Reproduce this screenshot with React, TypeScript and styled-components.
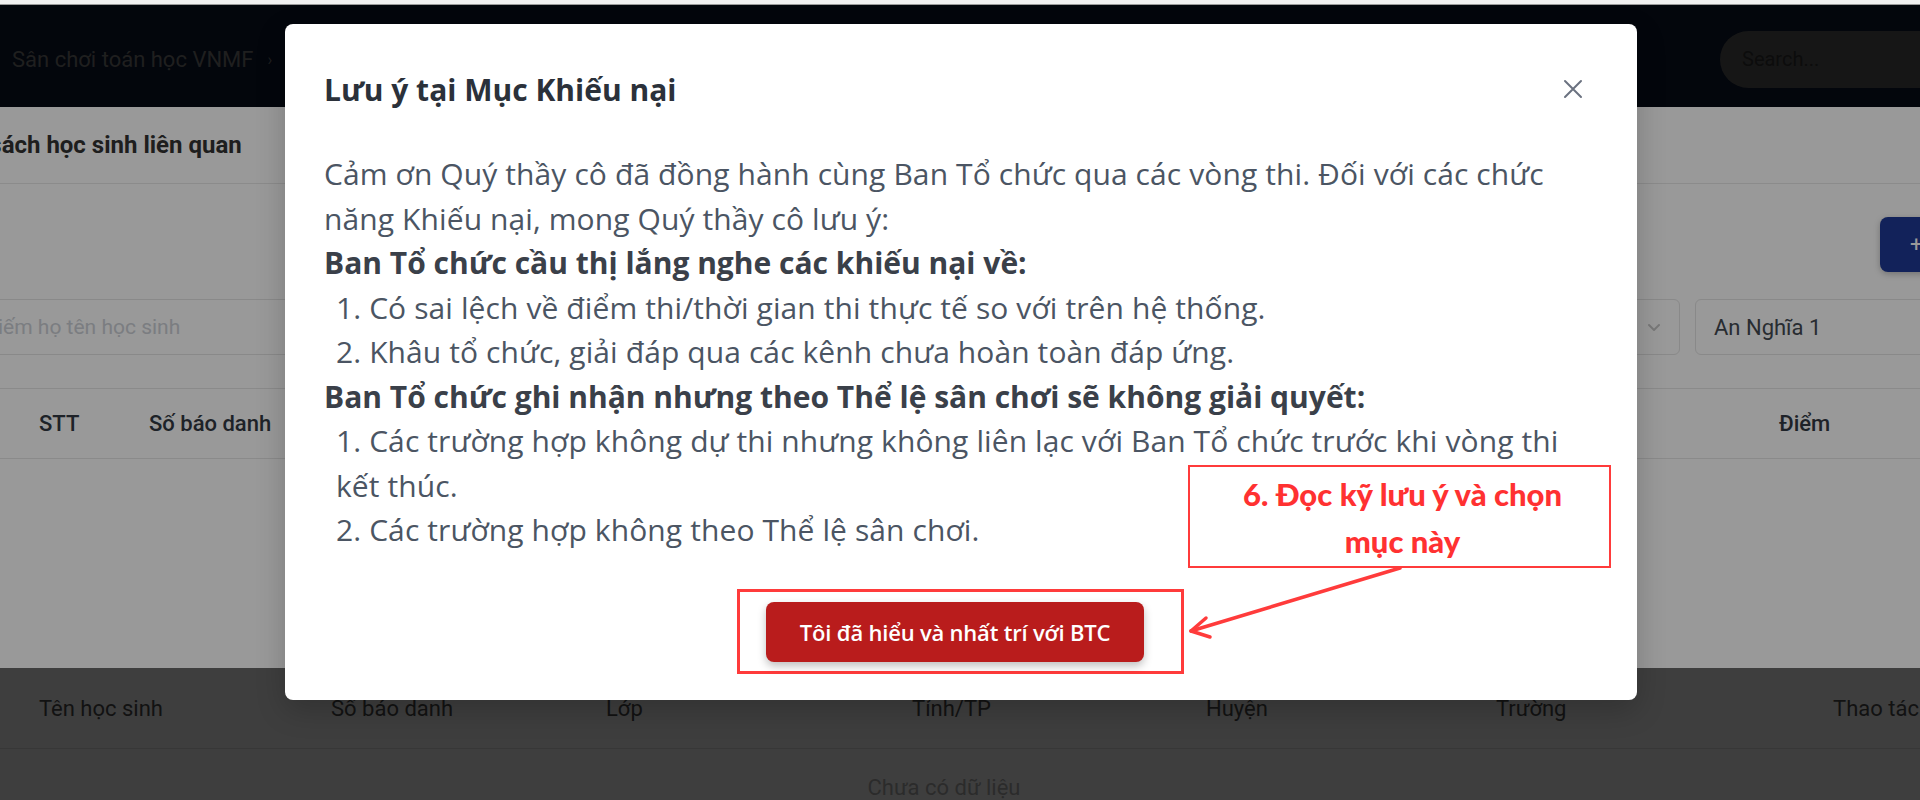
import React from 'react'
import styled, { createGlobalStyle } from 'styled-components'

const GlobalStyle = createGlobalStyle`
  html, body {
    margin: 0;
    padding: 0;
    background: #ffffff;
  }
  body {
    font-family: Roboto, "Noto Sans", sans-serif;
  }
  * {
    box-sizing: border-box;
  }
`

const LOWER_COLUMNS = ['Tên học sinh', 'Số báo danh', 'Lớp', 'Tỉnh/TP', 'Huyện', 'Trường', 'Thao tác']

const Shell = styled.div`
  width: 1920px;
  height: 800px;
  overflow: hidden;
  display: flex;
  flex-direction: column;
`

const BrowserEdge = styled.div`
  height: 5px;
  flex-shrink: 0;
  background: #f1f1f1;
  border-bottom: 1px solid #9a9a9a;
`

const Screen = styled.div`
  position: relative;
  flex: 1;
  display: flex;
  flex-direction: column;
  overflow: hidden;
`

const NavBar = styled.header`
  height: 102px;
  flex-shrink: 0;
  background: #050a14;
  display: flex;
  align-items: center;
  justify-content: space-between;
  padding: 6px 0 0 12px;
`

const Crumb = styled.div`
  display: flex;
  align-items: center;
  gap: 14px;
  font-size: 22px;
  color: #353535;
`

const CrumbArrow = styled.span`
  font-size: 16px;
`

const SearchPill = styled.div`
  width: 240px;
  height: 57px;
  margin-right: -40px;
  border-radius: 29px;
  background: #262626;
  color: #141414;
  font-size: 20px;
  display: flex;
  align-items: center;
  padding-left: 22px;
`

const Main = styled.main`
  width: calc(100% + 150px);
  margin-left: -72px;
  background: #ffffff;
  flex: 1;
  display: flex;
  flex-direction: column;
`

const PageTitle = styled.h1`
  margin: 0;
  height: 77px;
  display: flex;
  align-items: center;
  font-size: 24px;
  font-weight: 700;
  color: #333333;
  border-bottom: 1px solid #e8e8e8;
`

const Toolbar = styled.div`
  display: flex;
  justify-content: flex-end;
  padding-top: 33px;
`

const AddButton = styled.button`
  width: 118px;
  height: 55px;
  border: none;
  border-radius: 8px;
  background: #1e3996;
  color: #ffffff;
  font-size: 22px;
  font-family: inherit;
  text-align: left;
  padding-left: 30px;
  box-shadow: 0 2px 6px rgba(0, 0, 0, 0.25);
`

const Filters = styled.div`
  display: grid;
  grid-template-columns: 1fr 300px 303px;
  gap: 15px;
  margin-top: 27px;
  height: 56px;
`

const Field = styled.div<{ muted?: boolean }>`
  border: 1px solid #e4e4e4;
  border-radius: 6px;
  display: flex;
  align-items: center;
  justify-content: space-between;
  padding: 0 16px 0 ${p => (p.muted ? 17 : 18)}px;
  font-size: ${p => (p.muted ? 21 : 22)}px;
  color: ${p => (p.muted ? '#cdd1d7' : '#444a52')};
`

const TableHead = styled.div<{ columns: string }>`
  display: grid;
  grid-template-columns: ${p => p.columns};
  align-items: center;
  margin-top: 33px;
  height: 71px;
  padding-left: 111px;
  border-top: 1px solid #e6e6e6;
  border-bottom: 1px solid #e6e6e6;
  font-size: 22px;
  font-weight: 500;
  color: #333a44;
`

const LowerPanel = styled.section`
  height: 132px;
  flex-shrink: 0;
  background: #686868;
`

const LowerHead = styled.div`
  display: grid;
  grid-template-columns: 292px 275px 306px 294px 290px 337px 1fr;
  align-items: center;
  height: 81px;
  padding-left: 39px;
  border-bottom: 1px solid #5c5c5c;
  font-size: 22px;
  color: #1e1e1e;
`

const EmptyRow = styled.div`
  text-align: center;
  padding: 26px 32px 0 0;
  font-size: 22px;
  color: #484848;
`

const Backdrop = styled.div`
  position: absolute;
  inset: 0;
  background: rgba(0, 0, 0, 0.4);
`

const ModalLayer = styled.div`
  position: absolute;
  inset: 0;
  display: flex;
  justify-content: center;
  align-items: flex-start;
  padding: 19px 0 0 2px;
`

const Dialog = styled.div`
  position: relative;
  width: 1352px;
  background: #ffffff;
  border-radius: 8px;
  box-shadow: 0 10px 30px rgba(0, 0, 0, 0.2);
  padding: 47px 40px 26px 39px;
  font-family: "Open Sans", "Noto Sans", sans-serif;
`

const DialogHeader = styled.div`
  display: flex;
  align-items: center;
  justify-content: space-between;
  height: 36px;
`

const DialogTitle = styled.h2`
  margin: 0;
  font-size: 30px;
  font-weight: 700;
  color: #2b313a;
`

const CloseButton = styled.button`
  width: 48px;
  height: 48px;
  border: none;
  background: none;
  display: flex;
  align-items: center;
  justify-content: center;
  padding: 0;
  color: #6b7280;
`

const DialogBody = styled.div`
  margin-top: 45px;
  font-size: 30px;
  line-height: 44.5px;
  letter-spacing: 0.1px;
  color: #4b5563;
`

const Strong = styled.div`
  font-weight: 700;
  color: #3a4049;
  letter-spacing: 0;
`

const Item = styled.div`
  padding-left: 12px;
`

const ActionRow = styled.div`
  display: flex;
  justify-content: center;
  margin-top: 36px;
`

const ButtonFrame = styled.div`
  border: 3px solid #ff3b3b;
  padding: 10px 37px 9px 26px;
`

const AgreeButton = styled.button`
  height: 60px;
  padding: 0 34px;
  border: none;
  border-radius: 8px;
  background: #b91c1c;
  color: #ffffff;
  font-family: "Open Sans", "Noto Sans", sans-serif;
  font-size: 22px;
  font-weight: 600;
  letter-spacing: -0.2px;
  box-shadow: 0 4px 8px rgba(0, 0, 0, 0.25);
`

const Callout = styled.div`
  position: absolute;
  left: 903px;
  top: 441px;
  width: 423px;
  height: 103px;
  border: 2px solid #ff3b3b;
  background: #ffffff;
  padding: 4px 0 0 6px;
  text-align: center;
  font-family: Lato, "Open Sans", sans-serif;
  font-weight: 900;
  font-size: 31px;
  line-height: 47px;
  color: #ff3131;
`

const CalloutLine = styled.span`
  display: block;
  white-space: nowrap;
`

const Pointer = styled.svg`
  position: absolute;
  left: 0;
  top: 0;
  overflow: visible;
  pointer-events: none;
`

const CloseIcon = () => (
  <svg width="22" height="22" viewBox="0 0 22 22" fill="none" stroke="currentColor" strokeWidth="2" strokeLinecap="round">
    <path d="M3 3 L19 19 M19 3 L3 19" />
  </svg>
)

const Chevron = () => (
  <svg width="18" height="18" viewBox="0 0 18 18" fill="none" stroke="#c9c9c9" strokeWidth="2" strokeLinecap="round" strokeLinejoin="round">
    <path d="M4 7 L9 12 L14 7" />
  </svg>
)

const App: React.FC = () => {
  return (
    <>
      <GlobalStyle />
      <Shell>
        <BrowserEdge />
        <Screen>
          <NavBar>
            <Crumb>
              Sân chơi toán học VNMF <CrumbArrow>›</CrumbArrow>
            </Crumb>
            <SearchPill>Search...</SearchPill>
          </NavBar>

          <Main>
            <PageTitle>Danh sách học sinh liên quan</PageTitle>
            <Toolbar>
              <AddButton>+ Thêm</AddButton>
            </Toolbar>
            <Filters>
              <Field muted>Tìm kiếm họ tên học sinh</Field>
              <Field muted>
                <span>Chọn trường</span>
                <Chevron />
              </Field>
              <Field>An Nghĩa 1</Field>
            </Filters>
            <TableHead columns="110px 1630px auto">
              <div>STT</div>
              <div>Số báo danh</div>
              <div>Điểm</div>
            </TableHead>
          </Main>

          <LowerPanel>
            <LowerHead>
              {LOWER_COLUMNS.map(c => (
                <div key={c}>{c}</div>
              ))}
            </LowerHead>
            <EmptyRow>Chưa có dữ liệu</EmptyRow>
          </LowerPanel>

          <Backdrop />

          <ModalLayer>
            <Dialog>
              <DialogHeader>
                <DialogTitle>Lưu ý tại Mục Khiếu nại</DialogTitle>
                <CloseButton aria-label="Đóng">
                  <CloseIcon />
                </CloseButton>
              </DialogHeader>

              <DialogBody>
                <div>
                  Cảm ơn Quý thầy cô đã đồng hành cùng Ban Tổ chức qua các vòng thi. Đối với các chức năng Khiếu nại,
                  mong Quý thầy cô lưu ý:
                </div>
                <Strong>Ban Tổ chức cầu thị lắng nghe các khiếu nại về:</Strong>
                <Item>1. Có sai lệch về điểm thi/thời gian thi thực tế so với trên hệ thống.</Item>
                <Item>2. Khâu tổ chức, giải đáp qua các kênh chưa hoàn toàn đáp ứng.</Item>
                <Strong>Ban Tổ chức ghi nhận nhưng theo Thể lệ sân chơi sẽ không giải quyết:</Strong>
                <Item>
                  1. Các trường hợp không dự thi nhưng không liên lạc với Ban Tổ chức trước khi vòng thi kết thúc.
                </Item>
                <Item>2. Các trường hợp không theo Thể lệ sân chơi.</Item>
              </DialogBody>

              <ActionRow>
                <ButtonFrame>
                  <AgreeButton>Tôi đã hiểu và nhất trí với BTC</AgreeButton>
                </ButtonFrame>
              </ActionRow>

              <Callout>
                <CalloutLine>6. Đọc kỹ lưu ý và chọn</CalloutLine>
                <CalloutLine>mục này</CalloutLine>
              </Callout>
              <Pointer width="1" height="1">
                <g stroke="#ff3b3b" strokeWidth="3.5" strokeLinecap="round" fill="none">
                  <path d="M1115 544 L906 607" />
                  <path d="M906 607 L921 594 M906 607 L925 613" />
                </g>
              </Pointer>
            </Dialog>
          </ModalLayer>
        </Screen>
      </Shell>
    </>
  )
}

export default App
